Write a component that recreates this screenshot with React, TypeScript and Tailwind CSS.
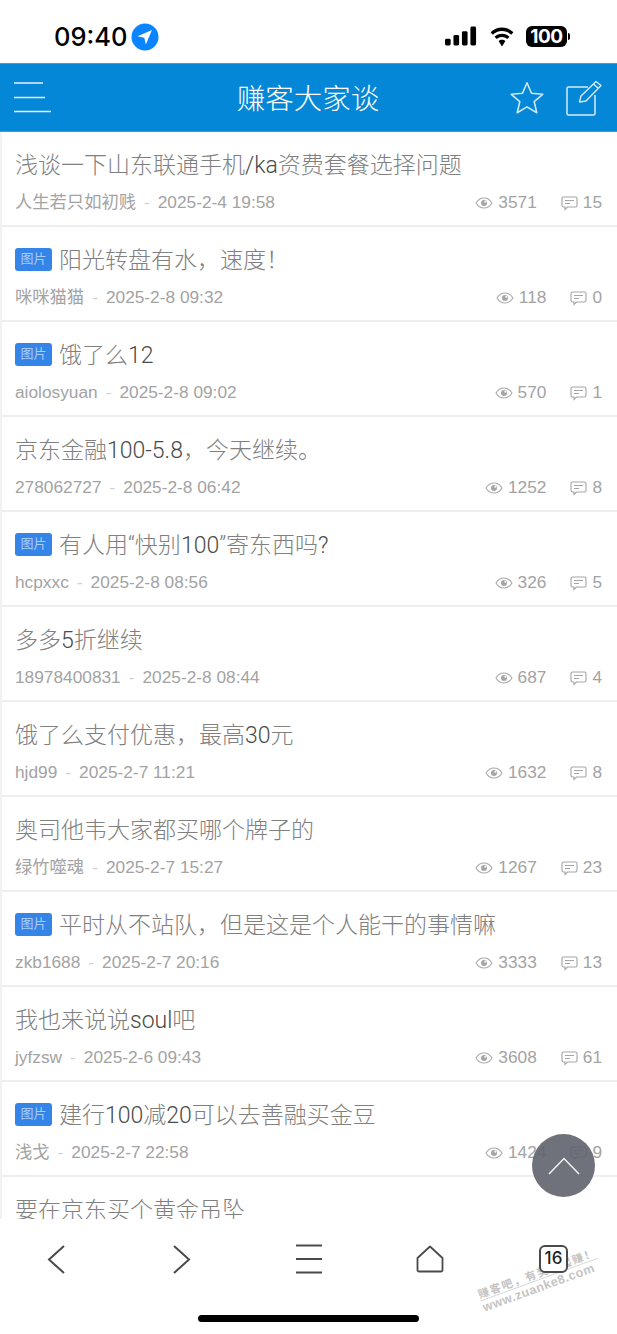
const posts = [
  { title: "浅谈一下山东联通手机/ka资费套餐选择问题", user: "人生若只如初贱", date: "2025-2-4 19:58", views: "3571", replies: "15" },
  { pic: true, title: "阳光转盘有水，速度！", user: "咪咪猫猫", date: "2025-2-8 09:32", views: "118", replies: "0" },
  { pic: true, title: "饿了么12", user: "aiolosyuan", date: "2025-2-8 09:02", views: "570", replies: "1" },
  { title: "京东金融100-5.8，今天继续。", user: "278062727", date: "2025-2-8 06:42", views: "1252", replies: "8" },
  { pic: true, title: "有人用“快别100”寄东西吗?", user: "hcpxxc", date: "2025-2-8 08:56", views: "326", replies: "5" },
  { title: "多多5折继续", user: "18978400831", date: "2025-2-8 08:44", views: "687", replies: "4" },
  { title: "饿了么支付优惠，最高30元", user: "hjd99", date: "2025-2-7 11:21", views: "1632", replies: "8" },
  { title: "奥司他韦大家都买哪个牌子的", user: "绿竹噬魂", date: "2025-2-7 15:27", views: "1267", replies: "23" },
  { pic: true, title: "平时从不站队，但是这是个人能干的事情嘛", user: "zkb1688", date: "2025-2-7 20:16", views: "3333", replies: "13" },
  { title: "我也来说说soul吧", user: "jyfzsw", date: "2025-2-6 09:43", views: "3608", replies: "61" },
  { pic: true, title: "建行100减20可以去善融买金豆", user: "浅戈", date: "2025-2-7 22:58", views: "1424", replies: "9" },
  { title: "要在京东买个黄金吊坠", user: "", date: "", views: "", replies: "" },
];

const EyeIcon = () => (
  <svg width="18" height="14" viewBox="0 0 18 14" fill="none" className="shrink-0">
    <path d="M1 7c2-3.400 4.800-5 8-5s6 1.600 8 5c-2 3.400-4.800 5-8 5s-6-1.600-8-5z" stroke="#aaa" strokeWidth="1.100" />
    <circle cx="9" cy="7" r="3" fill="#a5a5a5" />
    <circle cx="10.300" cy="5.800" r="1" fill="#fff" />
  </svg>
);

const CommentIcon = () => (
  <svg width="17" height="15" viewBox="0 0 17 15" fill="none" className="shrink-0">
    <path d="M2.500 1h12A1.500 1.500 0 0 1 16 2.500v7a1.500 1.500 0 0 1-1.500 1.500H6.500L4 13.500V11H2.500A1.500 1.500 0 0 1 1 9.500v-7A1.500 1.500 0 0 1 2.500 1z" stroke="#a5a5a5" strokeWidth="1.100" />
    <path d="M4 4.500h9M4 7.500h5" stroke="#a5a5a5" strokeWidth="1.100" />
  </svg>
);

// latin runs look darker than the thin CJK glyphs in the reference
const Title = ({ text }: { text: string }) => (
  <span className="whitespace-nowrap font-['Roboto','Noto_Sans_CJK_SC',sans-serif] text-[23px] font-light leading-[34px] text-[#808080]">
    {text.split(/([\x21-\x7e]+)/).map((part, i) =>
      i % 2 === 1 ? (
        <span key={i} className="text-[#4a4a4a]">
          {part}
        </span>
      ) : (
        part
      ),
    )}
  </span>
);

const PostRow = ({ post }: { post: (typeof posts)[number] }) => (
  <div className="h-[95px] shrink-0 border-b-2 border-[#eeeeee] px-[15px] pt-[17px]">
    <div className="flex h-[34px] items-center">
      {post.pic && (
        <span className="mb-[4px] mr-[7px] flex h-[23px] w-[37px] shrink-0 items-center justify-center rounded-[3px] bg-[#3584e8] text-[13px] text-[#a9cdf6]">
          图片
        </span>
      )}
      <Title text={post.title} />
    </div>
    {post.user && (
      <div className="mt-[8px] flex h-[24px] items-center text-[17.300px] text-[#a3a3a3]">
        <span>{post.user}</span>
        <span className="mx-[8px] text-[#d0d0d0]">-</span>
        <span>{post.date}</span>
        <span className="ml-auto flex items-center gap-[5px]">
          <EyeIcon />
          {post.views}
        </span>
        <span className="ml-[24px] flex items-center gap-[5px]">
          <CommentIcon />
          {post.replies}
        </span>
      </div>
    )}
  </div>
);

const App = () => {
  return (
    <div className="relative flex h-[1334px] w-[617px] flex-col overflow-hidden bg-white font-['Liberation_Sans','Noto_Sans_CJK_SC',sans-serif]">
      {/* status bar */}
      <div className="flex h-[63px] shrink-0 items-center pl-[54px] pr-[47px] pt-[10px]">
        <span className="font-['Inter',sans-serif] text-[25.500px] font-medium leading-none text-black">09:40</span>
        <svg width="28" height="28" viewBox="0 0 28 28" className="ml-[4px]">
          <circle cx="14" cy="14" r="13.500" fill="#0a84ff" />
          <path d="M21 7 6.500 13.200l6.800 1.500 1.500 6.800z" fill="#fff" />
        </svg>
        <svg width="32" height="20" viewBox="0 0 34 20" className="ml-auto -mt-[2px]">
          <rect x="0" y="13" width="6" height="7" rx="1.500" fill="#000" />
          <rect x="9" y="9" width="6" height="11" rx="1.500" fill="#000" />
          <rect x="18" y="5" width="6" height="15" rx="1.500" fill="#000" />
          <rect x="27" y="0" width="6" height="20" rx="1.500" fill="#000" />
        </svg>
        <svg width="28" height="20" viewBox="0 0 26 20" className="ml-[11px]">
          <path d="M13 4c3.600 0 6.800 1.400 9.200 3.700l2.200-2.400C21.400 2.400 17.400.600 13 .600S4.600 2.400 1.600 5.300l2.200 2.400C6.200 5.400 9.400 4 13 4z" fill="#000" />
          <path d="M13 10c2 0 3.800.800 5.200 2.100l2.300-2.400C18.500 7.800 15.900 6.700 13 6.700s-5.500 1.100-7.500 3l2.300 2.400C9.200 10.800 11 10 13 10z" fill="#000" />
          <path d="M13 12.800c-1.300 0-2.500.500-3.400 1.300L13 19.500l3.400-5.400c-.900-.800-2.100-1.300-3.400-1.300z" fill="#000" />
        </svg>
        <span className="ml-[10px] flex h-[21px] w-[41px] items-center justify-center rounded-[6px] bg-black font-['Inter',sans-serif] text-[19px] font-bold leading-none tracking-[-0.500px] text-white">
          100
        </span>
        <span className="ml-[1px] h-[7px] w-[2px] rounded-r-sm bg-black" />
      </div>

      {/* header */}
      <div className="flex h-[69px] shrink-0 items-center border-y border-[#3a9fdf] bg-[#0487d6] pl-[14px] pr-[13px]">
        <svg width="38" height="34" viewBox="0 0 38 34" fill="none" className="shrink-0">
          <path d="M0 2h29M0 16.500h31M0 30.500h37" stroke="#e8f4fc" strokeWidth="1.700" />
        </svg>
        <span className="flex-1 pl-[55px] text-center font-['Noto_Sans_CJK_SC',sans-serif] text-[28.500px] font-light leading-none text-white">
          赚客大家谈
        </span>
        <svg width="36" height="36" viewBox="0 0 32 32" fill="none" className="shrink-0">
          <path d="m16 2.500 4 9.300 10 .900-7.600 6.600 2.300 9.800-8.700-5.200-8.700 5.200 2.300-9.800L2 12.700l10-.900z" stroke="#cfe8f8" strokeWidth="1.400" strokeLinejoin="round" />
        </svg>
        <svg width="38" height="36" viewBox="0 0 38 36" fill="none" className="ml-[21px] shrink-0">
          <path d="M22 7H2.500A1.500 1.500 0 0 0 1 8.500v25A1.500 1.500 0 0 0 2.500 35h25a1.500 1.500 0 0 0 1.500-1.500V15" stroke="#d5ebf9" strokeWidth="1.500" />
          <path d="m13.500 22 1.500-6L30 1.500l5 4-15 15.500zM27.500 4l5 4.500" stroke="#d5ebf9" strokeWidth="1.400" strokeLinejoin="round" />
        </svg>
      </div>

      {/* list */}
      <div className="flex min-h-0 flex-1 flex-col overflow-hidden border-l-2 border-[#f2f2f2]">
        <div className="-ml-[2px] flex flex-col">
          {posts.map((post) => (
            <PostRow key={post.title} post={post} />
          ))}
        </div>
      </div>

      {/* bottom browser bar */}
      <div className="h-[115px] shrink-0 bg-white">
        <div className="flex h-[60px] items-center pl-[46px] pt-[19px]">
          <svg width="20" height="30" viewBox="0 0 20 30" fill="none">
            <path d="M18 2 3 15.500 18 29" stroke="#4a4a4a" strokeWidth="2" />
          </svg>
          <svg width="20" height="30" viewBox="0 0 20 30" fill="none" className="ml-[105px]">
            <path d="M3 2l15 13.500L3 29" stroke="#4a4a4a" strokeWidth="2" />
          </svg>
          <svg width="28" height="30" viewBox="0 0 28 30" fill="none" className="ml-[104px]">
            <path d="M1 1.500h26M1 15h26M1 28.500h26" stroke="#4a4a4a" strokeWidth="2" />
          </svg>
          <svg width="28" height="28" viewBox="0 0 28 28" fill="none" className="ml-[93px]">
            <path d="M14 1.500 26.500 13v12a1.500 1.500 0 0 1-1.500 1.500H3A1.500 1.500 0 0 1 1.500 25V13z" stroke="#4a4a4a" strokeWidth="1.800" strokeLinejoin="round" />
          </svg>
          <span className="relative z-10 ml-[95px] flex h-[28px] w-[29px] items-center justify-center rounded-[6px] border-2 border-[#4a4a4a] bg-white font-['Inter',sans-serif] text-[17px] font-medium leading-none text-[#222]">
            16
          </span>
        </div>
        <div className="mx-auto mt-[36px] h-[7px] w-[221px] rounded-full bg-black" />
      </div>

      {/* scroll to top */}
      <div className="absolute left-[532px] top-[1134px] flex h-[63px] w-[63px] items-center justify-center rounded-full bg-[#5f636b]/90">
        <svg width="32" height="18" viewBox="0 0 32 18" fill="none">
          <path d="M1 17 16 1.500 31 17" stroke="#f2f2f2" strokeWidth="1.500" />
        </svg>
      </div>

      {/* watermark */}
      <div className="absolute left-[477px] top-[1265px] -rotate-[20deg] text-[#c4c4c4]">
        <div className="whitespace-nowrap border-b border-[#d8d8d8] font-['Noto_Sans_CJK_SC',sans-serif] text-[11px] font-bold leading-[14px] tracking-[1.500px]">
          赚客吧，有奖一起赚！
        </div>
        <div className="whitespace-nowrap text-[12.500px] font-bold leading-[15px] tracking-[0.500px]">www.zuanke8.com</div>
      </div>
    </div>
  );
};

export default App;
